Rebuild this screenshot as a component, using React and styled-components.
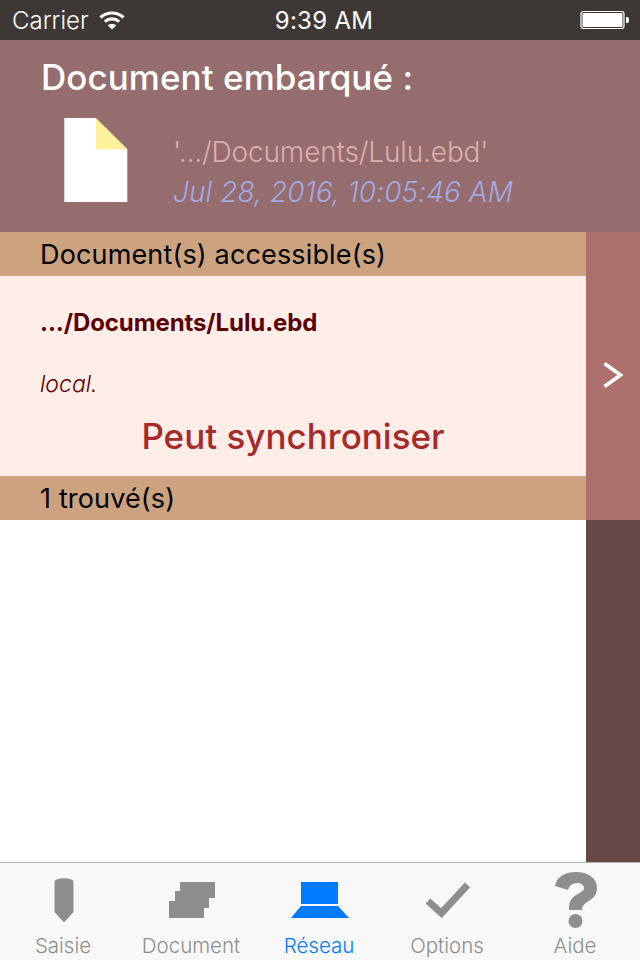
import React from "react";
import styled, { createGlobalStyle } from "styled-components";

const GlobalStyle = createGlobalStyle`
  html, body {
    margin: 0;
    padding: 0;
    background: #fff;
  }
  body {
    font-family: Inter, "Liberation Sans", sans-serif;
  }
`;

const Screen = styled.div`
  width: 640px;
  height: 960px;
  display: flex;
  flex-direction: column;
  overflow: hidden;
`;

const StatusBar = styled.div`
  height: 40px;
  flex: none;
  display: grid;
  grid-template-columns: 1fr auto 1fr;
  align-items: center;
  padding: 0 10px 0 12px;
  background: #3d3835;
  color: #fff;
  font-size: 24px;
  box-sizing: border-box;
`;

const StatusLeft = styled.div`
  display: flex;
  align-items: center;
  gap: 10px;
  font-weight: 300;
`;

const Clock = styled.div`
  margin-left: 6px;
  font-weight: 400;
  letter-spacing: 0.3px;
`;

const StatusRight = styled.div`
  display: flex;
  justify-content: flex-end;
`;

const Header = styled.header`
  height: 192px;
  flex: none;
  box-sizing: border-box;
  padding: 16px 0 0 40px;
  background: #956d6e;
`;

const Title = styled.h1`
  margin: 0 0 0 1px;
  font-size: 35px;
  line-height: 43px;
  font-weight: 500;
  letter-spacing: 0.05px;
  color: #fff;
`;

const DocRow = styled.div`
  display: flex;
  align-items: flex-start;
  margin: 19px 0 0 24px;
`;

const DocInfo = styled.div`
  margin: 14px 0 0 45px;
`;

const DocPath = styled.div`
  font-size: 28px;
  line-height: 40px;
  font-weight: 300;
  letter-spacing: -0.15px;
  color: #dcaeae;
`;

const DocDate = styled.div`
  font-size: 28px;
  line-height: 40px;
  font-weight: 300;
  letter-spacing: 0.1px;
  font-style: italic;
  color: #a3a9e2;
`;

const Body = styled.div`
  flex: 1;
  display: flex;
  min-height: 0;
`;

const Content = styled.main`
  flex: 1;
  background: #fff;
`;

const SectionBar = styled.div`
  height: 44px;
  box-sizing: border-box;
  padding-left: 40px;
  background: #cca27f;
  color: #000;
  font-size: 27px;
  line-height: 46px;
  font-weight: 400;
  letter-spacing: 0.15px;
`;

const Card = styled.div`
  height: 200px;
  box-sizing: border-box;
  padding: 31px 40px 0;
  background: #ffeee8;
`;

const CardPath = styled.div`
  font-size: 24px;
  line-height: 32px;
  font-weight: 700;
  letter-spacing: -0.1px;
  color: #5a0000;
`;

const CardNote = styled.div`
  margin-top: 29px;
  font-size: 23px;
  line-height: 32px;
  font-weight: 300;
  font-style: italic;
  color: #5a0000;
`;

const CardStatus = styled.div`
  margin: 14px -40px 0;
  text-align: center;
  font-size: 35px;
  line-height: 44px;
  font-weight: 500;
  color: #a52a2a;
`;

const Rail = styled.aside`
  width: 54px;
  flex: none;
  display: flex;
  flex-direction: column;
  background: #664846;
`;

const RailButton = styled.div`
  height: 288px;
  box-sizing: border-box;
  padding-bottom: 2px;
  display: flex;
  align-items: center;
  justify-content: center;
  background: #ae706c;
`;

const TabBar = styled.nav`
  height: 98px;
  flex: none;
  box-sizing: border-box;
  display: grid;
  grid-template-columns: repeat(5, 128px);
  border-top: 1px solid #b2b2b2;
  background: #f8f8f8;
`;

const Tab = styled.div`
  display: flex;
  flex-direction: column;
  align-items: center;
  color: ${(p) => (p.$active ? "#007aff" : "#8e8e8e")};
`;

const TabIcon = styled.div`
  height: 71px;
  display: flex;
  align-items: center;
  justify-content: center;
  padding-top: 3px;
  box-sizing: border-box;
`;

const TabLabel = styled.div`
  margin-left: -2px;
  font-size: 20.5px;
  line-height: 24px;
  font-weight: 300;
`;

const Wifi = () => (
  <svg width="26" height="20" viewBox="0 0 26 20" fill="none" stroke="#fff" strokeWidth="3.2">
    <path d="M1.5 7.5C8 1.5 18 1.5 24.5 7.5" />
    <path d="M5.8 11.6C10 8 16 8 20.2 11.6" />
    <path d="M13 19.5L8.8 15.4C11 13.6 15 13.6 17.2 15.4Z" fill="#fff" stroke="none" />
  </svg>
);

const Battery = () => (
  <svg width="50" height="20" viewBox="0 0 50 20">
    <rect x="1" y="1.5" width="43" height="17" rx="2.5" fill="none" stroke="#fff" strokeWidth="1.2" />
    <rect x="2.5" y="3" width="40" height="14" rx="1" fill="#fff" />
    <path d="M46 7h1a2 2 0 0 1 2 2v2a2 2 0 0 1-2 2h-1z" fill="#fff" />
  </svg>
);

const DocIcon = () => (
  <svg width="64" height="84" viewBox="0 0 64 84">
    <path d="M0.3 0H32V31H63.3V84H0.3Z" fill="#fff" />
    <path d="M32 0L63.3 31H32Z" fill="#fff09a" />
  </svg>
);

const Chevron = () => (
  <svg width="20" height="26" viewBox="0 0 20 26" fill="none" stroke="#fff" strokeWidth="3.6">
    <path d="M1.5 1.5L17.5 13L1.5 24.5" />
  </svg>
);

const PenIcon = () => (
  <svg width="20" height="46" viewBox="0 0 20 46" fill="currentColor">
    <path d="M0.5 5C0.5 0 19.5 0 19.5 5V35L10 45.5L0.5 35Z" />
  </svg>
);

const StackIcon = () => (
  <svg width="46" height="36" viewBox="0 0 46 36" fill="currentColor">
    <path d="M11 0H46V16H40V26H35V36H0V19H6V9H11Z" />
  </svg>
);

const LaptopIcon = () => (
  <svg width="58" height="36" viewBox="0 0 58 36" fill="currentColor">
    <path d="M10 0H47V22H10Z" />
    <path d="M10 24H47L58 36H0Z" />
  </svg>
);

const CheckIcon = () => (
  <svg width="44" height="36" viewBox="0 0 44 36" fill="none" stroke="currentColor" strokeWidth="7">
    <path d="M2 19L15.5 31L41.5 3" />
  </svg>
);

const HelpIcon = () => (
  <svg width="44" height="56" viewBox="0 0 44 56" fill="currentColor">
    <path d="M1 14C3 4 12 0 22 0C34 0 43 6 43 16C43 24 38 27 33 30C29 33 28 35 28 38H15C15 31 16 27 22 23C27 20 30 19 30 16C30 13 27 11 23 11C18 11 15 14 14 18Z" />
    <circle cx="21.5" cy="49" r="7" />
  </svg>
);

const tabs = [
  { label: "Saisie", icon: <PenIcon /> },
  { label: "Document", icon: <StackIcon /> },
  { label: "Réseau", icon: <LaptopIcon />, active: true },
  { label: "Options", icon: <CheckIcon /> },
  { label: "Aide", icon: <HelpIcon /> },
];

const App = () => {
  return (
    <Screen>
      <GlobalStyle />
      <StatusBar>
        <StatusLeft>
          Carrier
          <Wifi />
        </StatusLeft>
        <Clock>9:39 AM</Clock>
        <StatusRight>
          <Battery />
        </StatusRight>
      </StatusBar>
      <Header>
        <Title>Document embarqué :</Title>
        <DocRow>
          <DocIcon />
          <DocInfo>
            <DocPath>'.../Documents/Lulu.ebd'</DocPath>
            <DocDate>Jul 28, 2016, 10:05:46 AM</DocDate>
          </DocInfo>
        </DocRow>
      </Header>
      <Body>
        <Content>
          <SectionBar>Document(s) accessible(s)</SectionBar>
          <Card>
            <CardPath>.../Documents/Lulu.ebd</CardPath>
            <CardNote>local.</CardNote>
            <CardStatus>Peut synchroniser</CardStatus>
          </Card>
          <SectionBar>1 trouvé(s)</SectionBar>
        </Content>
        <Rail>
          <RailButton>
            <Chevron />
          </RailButton>
        </Rail>
      </Body>
      <TabBar>
        {tabs.map((tab) => (
          <Tab key={tab.label} $active={tab.active}>
            <TabIcon>{tab.icon}</TabIcon>
            <TabLabel>{tab.label}</TabLabel>
          </Tab>
        ))}
      </TabBar>
    </Screen>
  );
};

export default App;
